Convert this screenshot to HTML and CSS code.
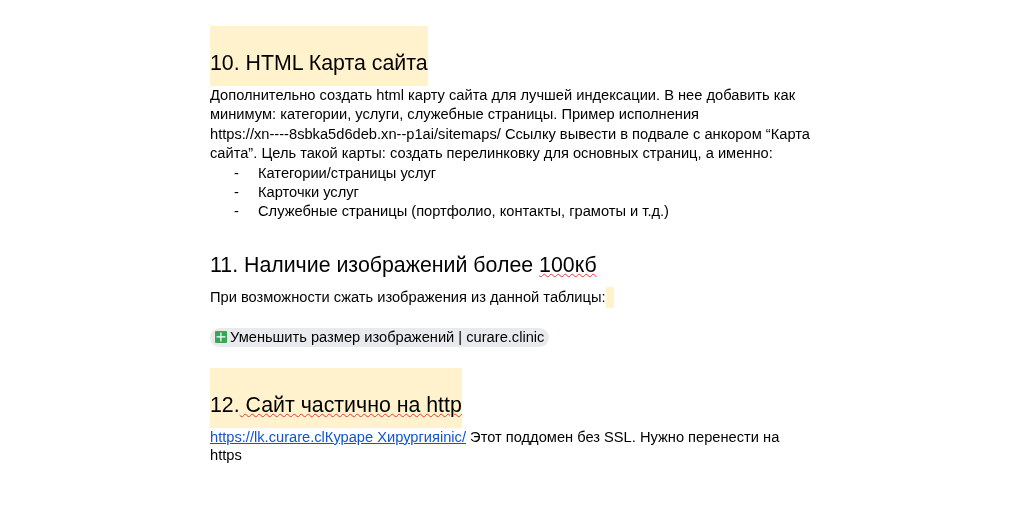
FILE: index.html
```html
<!DOCTYPE html>
<html lang="ru">
<head>
<meta charset="utf-8">
<title>Документ</title>
<link rel="stylesheet" href="styles.css">
</head>
<body>
<main class="doc">
  <h2 class="heading first"><span class="hl tall">10. HTML Карта сайта</span></h2>
  <p class="para">Дополнительно создать html карту сайта для лучшей индексации. В нее добавить как<br>минимум: категории, услуги, служебные страницы. Пример исполнения<br>https://xn----8sbka5d6deb.xn--p1ai/sitemaps/ Ссылку вывести в подвале с анкором “Карта<br>сайта”. Цель такой карты: создать перелинковку для основных страниц, а именно:</p>
  <ul class="list">
    <li>Категории/страницы услуг</li>
    <li>Карточки услуг</li>
    <li>Служебные страницы (портфолио, контакты, грамоты и т.д.)</li>
  </ul>
  <h2 class="heading second">11. Наличие изображений более <span class="err">100кб</span></h2>
  <p class="para single">При возможности сжать изображения из данной таблицы:<span class="hl gap"></span></p>
  <div class="chip-row">
    <span class="chip">
      <svg class="sheet" viewBox="0 0 12 12" aria-hidden="true"><rect width="12" height="12" rx="1" fill="#34a853"/><path d="M1.5 5.3h9v1.2h-9zM5.3 1.5h1.2v9H5.3z" fill="#fff"/></svg>
      Уменьшить размер изображений | curare.clinic
    </span>
  </div>
  <h2 class="heading third"><span class="hl tall short">12.<span class="err"> Сайт частично на http</span></span></h2>
  <p class="para last"><a class="link" href="#">https://lk.curare.clКураре Хирургияinic/</a> Этот поддомен без SSL. Нужно перенести на<br>https</p>
</main>
</body>
</html>
```

FILE: styles.css
```css
html, body {
  margin: 0;
  padding: 0;
  background: #fff;
}
body {
  width: 1027px;
  height: 508px;
  overflow: hidden;
  font-family: "Liberation Sans", Arial, sans-serif;
  color: #000;
}
.doc {
  padding: 26px 0 0 210px;
  width: 640px;
  filter: blur(0.3px);
}
.heading {
  margin: 0;
  font-weight: 400;
  font-size: 21.33px;
  line-height: 60px;
  height: 60px;
}
.hl {
  background: #fff2cc;
}
.tall {
  display: inline-block;
  height: 60px;
  line-height: 74px;
}
.para {
  margin: 0;
  font-size: 14.67px;
  line-height: 19.4px;
}
.list {
  margin: 0;
  padding: 0;
  list-style: none;
  font-size: 14.67px;
  line-height: 19.4px;
}
.list li {
  padding-left: 48px;
  position: relative;
}
.list li::before {
  content: "-";
  position: absolute;
  left: 24px;
}
.second {
  margin-top: 23px;
  height: 40px;
  line-height: 40px;
}
.err {
  text-decoration: underline wavy #e03a3a 1px;
  text-underline-offset: 1px;
}
.single {
  margin-top: 2px;
  line-height: 20px;
}
.gap {
  display: inline-block;
  width: 8px;
  height: 21px;
  vertical-align: top;
}
.chip-row {
  margin-top: 20px;
  height: 20px;
}
.chip {
  display: inline-flex;
  align-items: center;
  gap: 3px;
  height: 19px;
  padding: 0 5px;
  background: #e8eaed;
  border-radius: 10px;
  font-size: 14.67px;
}
.sheet {
  width: 12px;
  height: 12px;
}
.third {
  margin-top: 20px;
}
.link {
  color: #1155cc;
}
.last {
  width: 600px;
  line-height: 18.6px;
}
```
